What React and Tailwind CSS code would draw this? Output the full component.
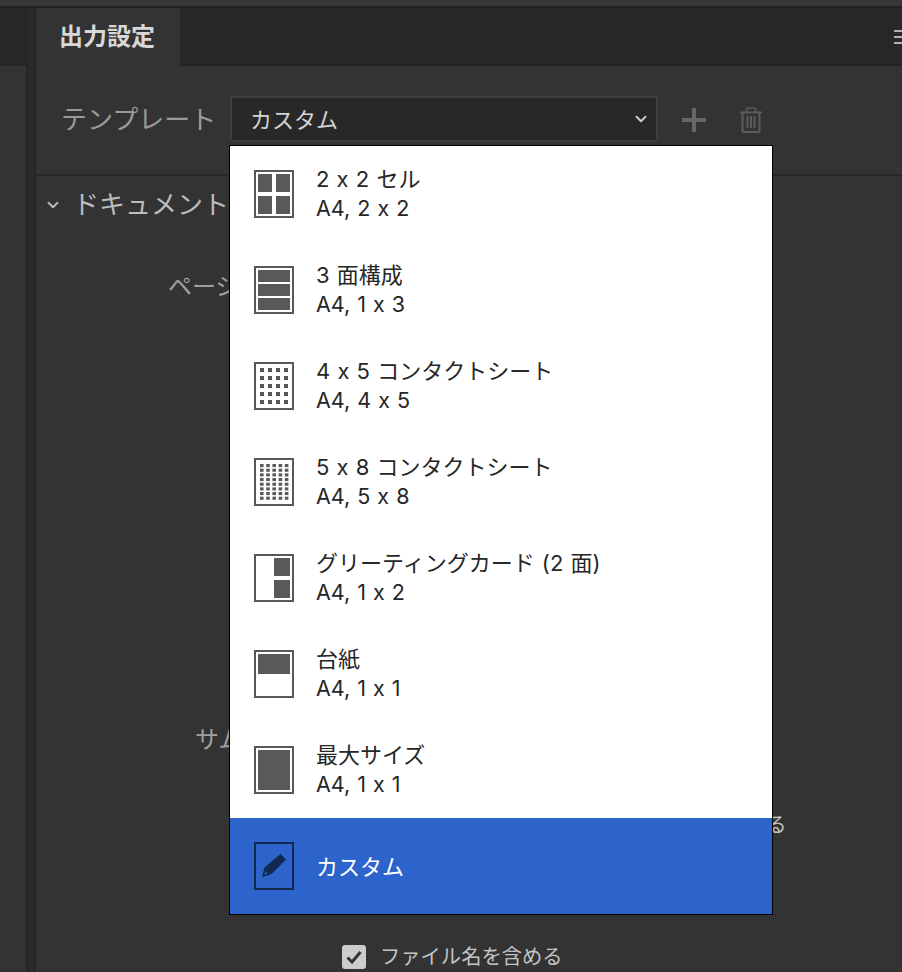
import { ChevronDown } from 'lucide-react'

const TEMPLATES = [
    { name: '2 x 2 セル', size: 'A4, 2 x 2', icon: 'grid' },
    { name: '3 面構成', size: 'A4, 1 x 3', icon: 'rows' },
    { name: '4 x 5 コンタクトシート', size: 'A4, 4 x 5', icon: 'dots4' },
    { name: '5 x 8 コンタクトシート', size: 'A4, 5 x 8', icon: 'dots5' },
    { name: 'グリーティングカード (2 面)', size: 'A4, 1 x 2', icon: 'card' },
    { name: '台紙', size: 'A4, 1 x 1', icon: 'mat' },
    { name: '最大サイズ', size: 'A4, 1 x 1', icon: 'full' },
]

const ICON_RECTS = {
    grid: [[4, 4, 14, 18], [22, 4, 14, 18], [4, 26, 14, 18], [22, 26, 14, 18]],
    rows: [[4, 4, 32, 12], [4, 18, 32, 12], [4, 32, 32, 12]],
    card: [[20, 4, 16, 18], [20, 26, 16, 18]],
    mat: [[4, 4, 32, 20]],
    full: [[4, 4, 32, 40]],
}

function iconRects(icon) {
    if (icon === 'dots4') {
        const out = []
        for (let r = 0; r < 5; r++) {
            for (let c = 0; c < 4; c++) out.push([6 + c * 8, 6 + r * 8, 4, 4])
        }
        return out
    }
    if (icon === 'dots5') {
        const out = []
        for (let r = 0; r < 8; r++) {
            for (let c = 0; c < 5; c++) out.push([6 + c * 6.2, 6 + r * 4.67, 3.6, 3.1])
        }
        return out
    }
    return ICON_RECTS[icon]
}

function TemplateIcon({ icon }) {
    return (
        <svg width="40" height="48" viewBox="0 0 40 48" className="flex-none">
            <rect x="1" y="1" width="38" height="46" fill="none" stroke="#595959" strokeWidth="2" />
            {iconRects(icon).map(([x, y, w, h], i) => (
                <rect key={i} x={x} y={y} width={w} height={h} fill="#595959" />
            ))}
        </svg>
    )
}

function PencilIcon() {
    return (
        <svg width="40" height="48" viewBox="0 0 40 48" className="flex-none">
            <rect x="1" y="1" width="38" height="46" fill="none" stroke="#12294f" strokeWidth="2" />
            <path d="M26.5 12L32 17.5L17.5 32L8 35.2L10.5 25.5Z" fill="#12294f" />
            <path d="M10.3 32.8L11.4 29.2L13.6 31.4Z" fill="#2d64cb" />
        </svg>
    )
}

function TemplateMenu() {
    return (
        <div className="absolute left-[229px] top-[145px] w-[544px] border border-black bg-white font-['Inter','Noto_Sans_CJK_JP',sans-serif] [font-feature-settings:'calt'_0]">
            {TEMPLATES.map((t) => (
                <div key={t.name} className="flex h-[96px] items-center gap-[22px] pl-[24px] text-[#262626]">
                    <TemplateIcon icon={t.icon} />
                    <div className="flex flex-col gap-[1px] pb-[2px] text-[22px] leading-[28px] [word-spacing:1px]">
                        <span>{t.name}</span>
                        <span className="text-[21.5px]">{t.size}</span>
                    </div>
                </div>
            ))}
            <div className="flex h-[96px] items-center gap-[22px] bg-[#2d64cb] pl-[24px] text-white">
                <PencilIcon />
                <span className="pt-[2px] text-[22px]">カスタム</span>
            </div>
        </div>
    )
}

export default function App() {
    return (
        <div className="relative h-[972px] w-[902px] overflow-hidden bg-[#333333] font-['Liberation_Sans','Noto_Sans_CJK_JP',sans-serif]">
            <div className="h-[8px] border-b-2 border-[#222222] bg-[#383838]"></div>
            <div className="flex h-[964px]">
                <div className="w-[26px] flex-none">
                    <div className="h-[58px] border-b-2 border-[#262626] bg-[#282828]"></div>
                </div>
                <div className="w-[10px] flex-none border-x-2 border-[#262626] bg-[#2b2b2b]"></div>
                <div className="flex min-w-0 flex-1 flex-col">
                    <div className="flex h-[58px] flex-none border-b-2 border-[#222222] bg-[#282828]">
                        <div className="-mb-[2px] flex h-[58px] w-[144px] items-center bg-[#333333] pl-[23px] text-[24px] font-bold text-[#d8d8d8]">
                            出力設定
                        </div>
                        <div className="ml-auto mt-[22px] flex h-[14px] w-[8px] flex-col justify-between">
                            <div className="h-[2px] bg-[#b0b0b0]"></div>
                            <div className="h-[2px] bg-[#b0b0b0]"></div>
                            <div className="h-[2px] bg-[#b0b0b0]"></div>
                        </div>
                    </div>
                    <div className="flex h-[110px] flex-none items-start border-b-2 border-[#272727] pt-[30px]">
                        <span className="ml-[25px] mt-[6px] w-[169px] text-[26px] leading-[36px] text-[#9a9a9a]">テンプレート</span>
                        <div className="flex h-[46px] w-[428px] items-center justify-between rounded-[3px] border-2 border-[#3e3e3e] bg-[#282828] pl-[18px] pr-[6px] text-[22px] text-[#d4d4d4]">
                            <span className="pt-[3px]">カスタム</span>
                            <ChevronDown size={18} strokeWidth={2.5} className="text-[#cccccc]" />
                        </div>
                        <svg width="24" height="24" viewBox="0 0 24 24" className="ml-[24px] mt-[12px]">
                            <path d="M10 0h4v10h10v4H14v10h-4V14H0v-4h10z" fill="#666666" />
                        </svg>
                        <svg width="24" height="26" viewBox="0 0 24 26" className="ml-[33px] mt-[11px]" fill="none" stroke="#5c5c5c">
                            <path d="M1 5.500h22" strokeWidth="2" />
                            <path d="M7.500 5V2.500Q7.500 1 9 1h6q1.500 0 1.500 1.500V5" strokeWidth="1.500" />
                            <path d="M3.500 6v17.500q0 1.500 1.500 1.500h14q1.500 0 1.500-1.500V6" strokeWidth="2" />
                            <path d="M8.500 9v12M12 9v12M15.500 9v12" strokeWidth="2" />
                        </svg>
                    </div>
                    <div className="flex items-center pl-[8px] pt-[11px]">
                        <ChevronDown size={18} strokeWidth={2.5} className="text-[#b8b8b8]" />
                        <span className="ml-[11px] text-[26px] leading-[36px] text-[#bdbdbd]">ドキュメント</span>
                    </div>
                    <div className="ml-[132px] mt-[46px] text-[24px] leading-[36px] text-[#a0a0a0]">ページ設定</div>
                    <div className="ml-[159px] mt-[417px] text-[24px] leading-[36px] text-[#a0a0a0]">サムネール</div>
                    <div className="ml-[591px] mt-[53px] text-[20px] leading-[28px] text-[#c4c4c4]">ページを回転する</div>
                    <div className="ml-[306px] mt-[104px] flex items-center gap-[14px]">
                        <div className="flex h-[24px] w-[24px] items-center justify-center rounded-[3px] bg-[#cccccc]">
                            <svg width="16" height="14" viewBox="0 0 16 14" fill="none">
                                <path d="M1.500 7.500L6 12L14.500 2" stroke="#333333" strokeWidth="3" />
                            </svg>
                        </div>
                        <span className="text-[20.3px] leading-[28px] text-[#c4c4c4]">ファイル名を含める</span>
                    </div>
                </div>
            </div>
            <TemplateMenu />
        </div>
    )
}
